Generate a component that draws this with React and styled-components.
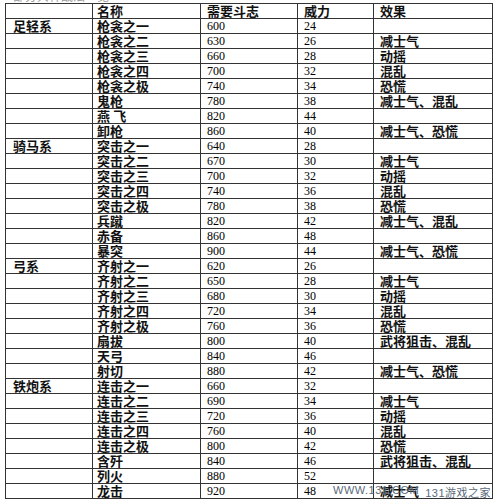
import React from 'react';
import styled, { createGlobalStyle } from 'styled-components';

const GlobalStyle = createGlobalStyle`
  body {
    margin:0;
    background:#fff;
    font-family:"Liberation Serif", "Noto Sans CJK SC", serif;
  }
`;

const Page = styled.div`
  position:relative;
  width:497px;
  height:500px;
  overflow:hidden;
  padding-left:5px;
  box-sizing:border-box;
`;

const Caption = styled.div`
  height:3px;
  overflow:hidden;
  display:flex;
  align-items:flex-end;
  padding-left:8px;
  font-size:12px;
  line-height:12px;
  color:#999;
`;

const Table = styled.table`
  width:487px;
  border-collapse:collapse;
  table-layout:fixed;
  color:#111;
`;

const Col = styled.col`
  width:${props => props.w}px;
`;

const Row = styled.tr`
  height:${props => props.h}px;
`;

const Cell = styled.td`
  border:1px solid #333;
  padding:1px 0 0 ${props => props.pad}px;
  font-size:${props => props.num ? 12 : 13}px;
  line-height:13px;
  font-weight:${props => props.num ? 400 : 600};
  color:${props => props.num ? '#000' : '#111'};
  white-space:nowrap;
  overflow:hidden;
  vertical-align:middle;
`;

const Watermark = styled.div`
  position:absolute;
  left:333px;
  top:484px;
  display:flex;
  gap:6px;
  font-family:"Liberation Sans", "Noto Sans CJK SC", sans-serif;
  font-size:11px;
  color:#5a6a7a;
  letter-spacing:0.5px;
`;

const widths = [87, 108, 97, 76, 119];
const pads = [7, 4, 6, 6, 6];

const groups = [
  { name: '足轻系', rows: [
    ['枪衾之一', 600, 24, ''],
    ['枪衾之二', 630, 26, '减士气'],
    ['枪衾之三', 660, 28, '动摇'],
    ['枪衾之四', 700, 32, '混乱'],
    ['枪衾之极', 740, 34, '恐慌'],
    ['鬼枪', 780, 38, '减士气、混乱'],
    ['燕 飞', 820, 44, ''],
    ['卸枪', 860, 40, '减士气、恐慌'],
  ]},
  { name: '骑马系', rows: [
    ['突击之一', 640, 28, ''],
    ['突击之二', 670, 30, '减士气'],
    ['突击之三', 700, 32, '动摇'],
    ['突击之四', 740, 36, '混乱'],
    ['突击之极', 780, 38, '恐慌'],
    ['兵蹴', 820, 42, '减士气、混乱'],
    ['赤备', 860, 48, ''],
    ['暴突', 900, 44, '减士气、恐慌'],
  ]},
  { name: '弓系', rows: [
    ['齐射之一', 620, 26, ''],
    ['齐射之二', 650, 28, '减士气'],
    ['齐射之三', 680, 30, '动摇'],
    ['齐射之四', 720, 34, '混乱'],
    ['齐射之极', 760, 36, '恐慌'],
    ['扇拔', 800, 40, '武将狙击、混乱'],
    ['天弓', 840, 46, ''],
    ['射切', 880, 42, '减士气、恐慌'],
  ]},
  { name: '铁炮系', rows: [
    ['连击之一', 660, 32, ''],
    ['连击之二', 690, 34, '减士气'],
    ['连击之三', 720, 36, '动摇'],
    ['连击之四', 760, 40, '混乱'],
    ['连击之极', 800, 42, '恐慌'],
    ['含歼', 840, 46, '武将狙击、混乱'],
    ['列火', 880, 52, ''],
    ['龙击', 920, 48, '减士气'],
  ]},
];

const App = () => {
  return (
    <>
      <GlobalStyle />
      <Page>
        <Caption>部分兵种战法一览</Caption>
        <Table>
          <colgroup>
            {widths.map((w, i) => <Col w={w} key={i} />)}
          </colgroup>
          <tbody>
            <Row h={14}>
              <Cell pad={pads[0]}></Cell>
              <Cell pad={pads[1]}>名称</Cell>
              <Cell pad={pads[2]}>需要斗志</Cell>
              <Cell pad={pads[3]}>威力</Cell>
              <Cell pad={pads[4]}>效果</Cell>
            </Row>
            {groups.map(g => g.rows.map((r, i) => (
              <Row h={14.9} key={g.name + i}>
                <Cell pad={pads[0]}>{i === 0 ? g.name : ''}</Cell>
                <Cell pad={pads[1]}>{r[0]}</Cell>
                <Cell pad={pads[2]} num>{r[1]}</Cell>
                <Cell pad={pads[3]} num>{r[2]}</Cell>
                <Cell pad={pads[4]}>{r[3]}</Cell>
              </Row>
            )))}
          </tbody>
        </Table>
        <Watermark>
          <span>WWW.131.COM</span>
          <span>131游戏之家</span>
        </Watermark>
      </Page>
    </>
  );
};

export default App;
